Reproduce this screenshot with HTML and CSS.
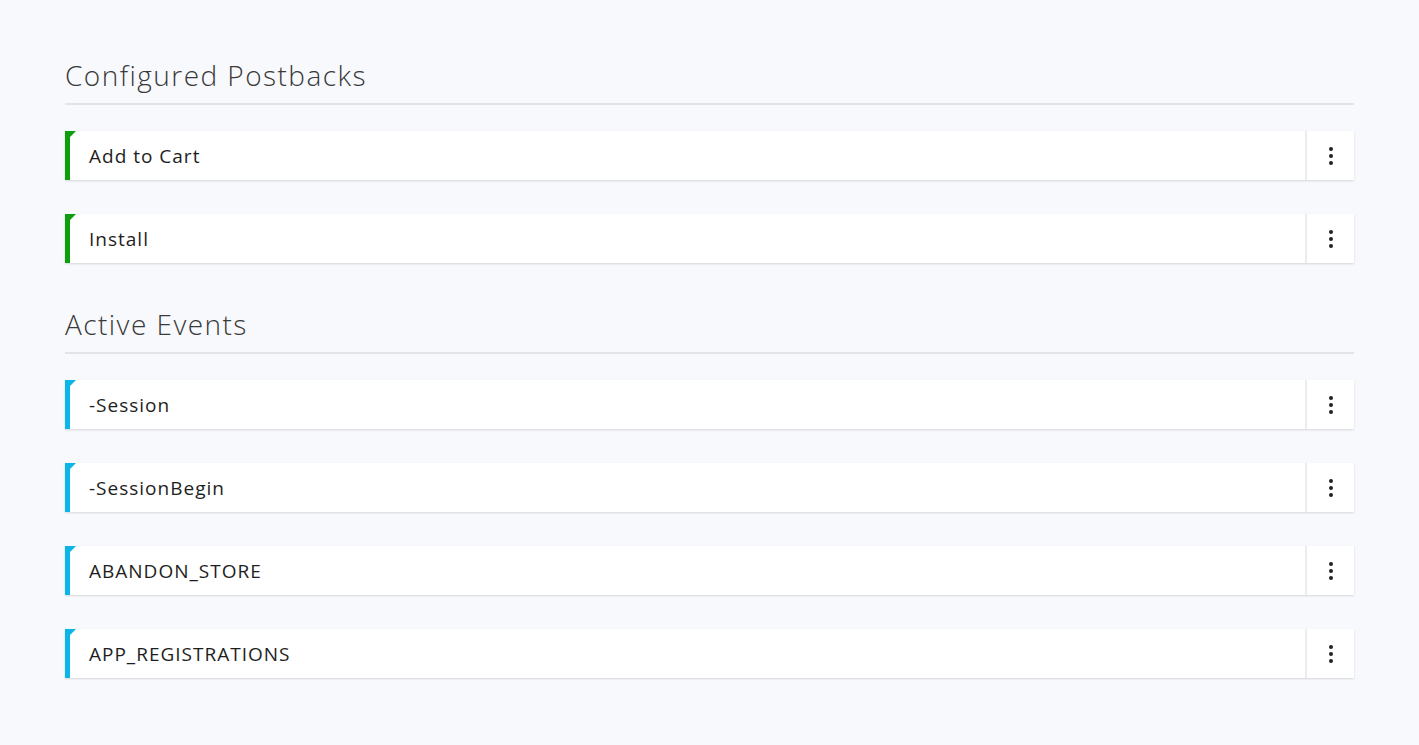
FILE: index.html
```html
<!DOCTYPE html>
<html>
<head>
<meta charset="utf-8">
<link rel="stylesheet" href="styles.css">
</head>
<body>
<main class="page">
  <section class="group">
    <h2 class="group-title">Configured Postbacks</h2>
    <div class="list">
      <div class="row row-green"><span class="row-label">Add to Cart</span><button class="row-menu"><span class="dots"><i></i><i></i><i></i></span></button></div>
      <div class="row row-green"><span class="row-label">Install</span><button class="row-menu"><span class="dots"><i></i><i></i><i></i></span></button></div>
    </div>
  </section>
  <section class="group group-second">
    <h2 class="group-title">Active Events</h2>
    <div class="list">
      <div class="row row-blue"><span class="row-label">-Session</span><button class="row-menu"><span class="dots"><i></i><i></i><i></i></span></button></div>
      <div class="row row-blue"><span class="row-label">-SessionBegin</span><button class="row-menu"><span class="dots"><i></i><i></i><i></i></span></button></div>
      <div class="row row-blue"><span class="row-label">ABANDON_STORE</span><button class="row-menu"><span class="dots"><i></i><i></i><i></i></span></button></div>
      <div class="row row-blue"><span class="row-label">APP_REGISTRATIONS</span><button class="row-menu"><span class="dots"><i></i><i></i><i></i></span></button></div>
    </div>
  </section>
</main>
</body>
</html>
```
FILE: styles.css
```css
html, body {
  margin: 0;
  padding: 0;
  background: #f8f9fd;
}
body {
  font-family: "Open Sans", "Liberation Sans", sans-serif;
  color: #222;
}
.page {
  padding: 59px 65px 40px;
}
.group-second {
  margin-top: 45px;
}
.group-title {
  margin: 0;
  font-size: 28px;
  font-weight: 300;
  line-height: 32px;
  color: #3a3a3a;
  padding-bottom: 12px;
  border-bottom: 2px solid #e3e4e8;
  letter-spacing: 1.45px;
}
.list {
  display: flex;
  flex-direction: column;
  gap: 34px;
  margin-top: 26px;
}
.row {
  position: relative;
  display: flex;
  align-items: stretch;
  height: 49px;
  background: #fff;
  box-shadow: 0 1px 2px rgba(0, 0, 0, 0.14);
}
.row::before {
  content: "";
  position: absolute;
  left: 0;
  top: 0;
  width: 11px;
  height: 100%;
  clip-path: polygon(0 0, 11px 0, 5px 6px, 5px 100%, 0 100%);
}
.row-green::before { background: #0d9e0d; }
.row-blue::before { background: #0bb5e6; }
.row-label {
  flex: 1;
  display: flex;
  align-items: center;
  padding-left: 24px;
  font-size: 19px;
  letter-spacing: 1px;
  color: #1e1e1e;
}
.row-menu {
  width: 49px;
  border: 0;
  border-left: 2px solid #ececee;
  background: #fff;
  padding: 0;
  display: flex;
  align-items: center;
  justify-content: center;
  cursor: pointer;
}
.dots {
  display: flex;
  flex-direction: column;
  gap: 3px;
}
.dots i {
  display: block;
  width: 4px;
  height: 4px;
  border-radius: 50%;
  background: #222;
}
```
